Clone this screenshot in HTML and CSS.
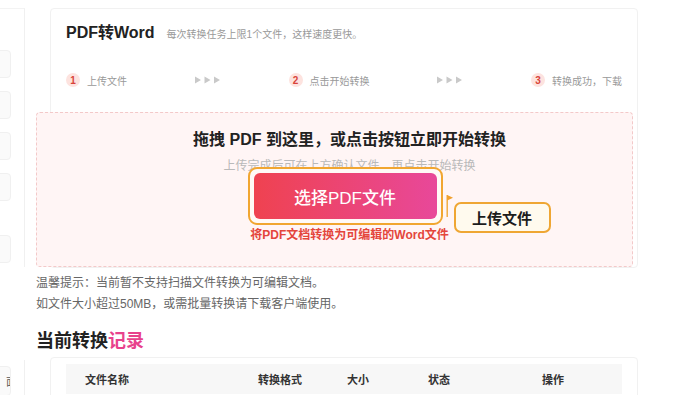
FILE: index.html
```html
<!DOCTYPE html>
<html lang="zh-CN">
<head>
<meta charset="utf-8">
<title>PDF转Word</title>
<link rel="stylesheet" href="styles.css">
</head>
<body>
<div class="page">
  <aside class="side">
    <div class="side-panel side-top">
      <div class="side-box"></div>
      <div class="side-box"></div>
      <div class="side-box"></div>
      <div class="side-box"></div>
      <div class="side-box side-box-far"></div>
    </div>
    <div class="side-panel side-bottom">
      <div class="side-box side-box-text"><span>面</span></div>
    </div>
  </aside>

  <main class="main">
    <section class="card conv">
      <header class="conv-head">
        <h1 class="conv-title">PDF转Word</h1>
        <p class="conv-desc">每次转换任务上限1个文件，这样速度更快。</p>
      </header>
      <ol class="steps">
        <li class="step"><span class="step-num">1</span>上传文件</li>
        <li class="step-arrows"><svg width="26" height="8" viewBox="0 0 26 8"><path d="M0 0.5L6 4L0 7.5Z M9.5 0.5L15.5 4L9.5 7.5Z M19 0.5L25 4L19 7.5Z" fill="#c9c9c9"/></svg></li>
        <li class="step"><span class="step-num">2</span>点击开始转换</li>
        <li class="step-arrows"><svg width="26" height="8" viewBox="0 0 26 8"><path d="M0 0.5L6 4L0 7.5Z M9.5 0.5L15.5 4L9.5 7.5Z M19 0.5L25 4L19 7.5Z" fill="#c9c9c9"/></svg></li>
        <li class="step"><span class="step-num">3</span>转换成功，下载</li>
      </ol>
      <div class="drop">
        <h2 class="drop-title">拖拽 PDF 到这里，或点击按钮立即开始转换</h2>
        <p class="drop-sub">上传完成后可在上方确认文件，再点击开始转换</p>
        <div class="pick-row">
          <div class="pick-wrap">
            <button class="pick" type="button">选择PDF文件</button>
            <div class="callout">
              <svg class="callout-flag" width="8" height="24" viewBox="0 0 8 24"><path d="M1.2 1V23" stroke="#f0a838" stroke-width="1.4"/><path d="M1.2 1L7 3.8L1.2 6.6Z" fill="#f0a02c"/></svg>
              <span class="callout-box">上传文件</span>
            </div>
          </div>
        </div>
        <p class="drop-note">将PDF文档转换为可编辑的Word文件</p>
      </div>
    </section>

    <p class="tips">温馨提示：当前暂不支持扫描文件转换为可编辑文档。<br>如文件大小超过50MB，或需批量转换请下载客户端使用。</p>

    <h2 class="rec-title">当前转换<em>记录</em></h2>

    <section class="card records">
      <div class="thead">
        <span>文件名称</span>
        <span>转换格式</span>
        <span>大小</span>
        <span>状态</span>
        <span>操作</span>
      </div>
    </section>
  </main>
</div>
</body>
</html>
```

FILE: styles.css
```css
html, body {
  margin: 0;
  height: 395px;
  overflow: hidden;
  background: #ffffff;
}

body {
  font-family: "Liberation Sans", "Noto Sans CJK SC", sans-serif;
  color: #222222;
}

.page {
  display: flex;
  height: 395px;
  overflow: hidden;
}

/* sidebar */
.side {
  flex: none;
  width: 25px;
}

.side-panel {
  box-sizing: border-box;
  border-right: 1px solid #f0f0f0;
  overflow: hidden;
}

.side-top {
  margin-top: 8px;
  height: 259px;
  border-top: 1px solid #f3f3f3;
  padding-top: 41px;
}

.side-bottom {
  margin-top: 93px;
  height: 60px;
  padding-top: 6px;
}

.side-box {
  box-sizing: border-box;
  margin-left: -20px;
  width: 31px;
  height: 28px;
  margin-bottom: 13px;
  border: 1px solid #f0f0f0;
  border-radius: 4px;
  background: #fafafa;
}

.side-box-far {
  margin-top: 34px;
}

.side-box-text {
  height: 30px;
  display: flex;
  align-items: center;
  justify-content: flex-end;
  overflow: hidden;
  font-family: "Noto Sans CJK SC", sans-serif;
  font-size: 11px;
  color: #555555;
}

.side-box-text span {
  margin-right: -7px;
}

/* main column */
.main {
  flex: none;
  width: 597px;
  padding-left: 11px;
}

.card {
  border: 1px solid #f1f1f1;
  border-radius: 4px;
  background: #ffffff;
}

.conv {
  margin: 8px -5px 0 14px;
}

.conv-head {
  display: flex;
  align-items: baseline;
  padding: 12px 15px 0;
}

.conv-title {
  margin: 0;
  font-size: 16px;
  line-height: 24px;
  font-weight: 700;
  color: #222222;
}

.conv-desc {
  margin: 0 0 0 12px;
  font-size: 10px;
  color: #999999;
}

.steps {
  display: flex;
  justify-content: space-between;
  align-items: center;
  list-style: none;
  margin: 27px 0 0;
  padding: 0 15px;
  height: 16px;
}

.step {
  display: flex;
  align-items: center;
  font-size: 10px;
  color: #999999;
}

.step-num {
  width: 14px;
  height: 14px;
  border-radius: 50%;
  background: #fde3df;
  color: #d8433a;
  font-size: 10px;
  font-weight: 700;
  display: flex;
  align-items: center;
  justify-content: center;
  margin-right: 7px;
}

.step-arrows {
  display: flex;
  align-items: center;
}

/* drop zone */
.drop {
  box-sizing: border-box;
  height: 155px;
  margin: 24px 4px 0 -15px;
  padding: 16px 0 0 30px;
  border: 1px dashed #f3c9c9;
  border-radius: 4px;
  background: #fff5f5;
  text-align: center;
}

.drop-title {
  margin: 0;
  font-size: 16px;
  line-height: 22px;
  font-weight: 700;
  color: #222222;
}

.drop-sub {
  margin: 8px 0 0;
  font-size: 12px;
  line-height: 14px;
  color: #b9b9b9;
}

.pick-row {
  display: flex;
  justify-content: center;
}

.pick-wrap {
  position: relative;
  margin-left: -9px;
}

.pick-wrap::before {
  content: "";
  position: absolute;
  left: -6px;
  top: -6px;
  right: -6px;
  bottom: -6px;
  border: 2.5px solid #f1a631;
  border-radius: 9px;
  background: #fff9f6;
  box-sizing: border-box;
}

.pick {
  position: relative;
  display: block;
  width: 183px;
  height: 46px;
  border: 0;
  border-radius: 6px;
  background: linear-gradient(90deg, #ef4250, #e8489a);
  color: #ffffff;
  font-family: "Liberation Sans", "Noto Sans CJK SC", sans-serif;
  font-size: 17px;
  font-weight: 500;
  padding: 0;
}

.callout {
  position: absolute;
  left: 192px;
  top: 21px;
  display: flex;
  align-items: flex-start;
}

.callout-flag {
  display: block;
}

.callout-box {
  box-sizing: border-box;
  margin-top: 8px;
  width: 97px;
  height: 31px;
  border: 2px solid #efa633;
  border-radius: 7px;
  background: #fffaee;
  display: flex;
  align-items: center;
  justify-content: center;
  font-family: "Noto Sans CJK SC", sans-serif;
  font-size: 15px;
  font-weight: 700;
  color: #1c1c1c;
}

.drop-note {
  margin: 8px 0 0;
  font-size: 12px;
  line-height: 16px;
  font-weight: 600;
  color: #e4463c;
}

/* tips */
.tips {
  margin: 5px 0 0;
  font-size: 12px;
  line-height: 21px;
  color: #666666;
}

.rec-title {
  margin: 13px 0 0;
  font-size: 18px;
  line-height: 26px;
  font-weight: 700;
  color: #222222;
}

.rec-title em {
  font-style: normal;
  color: #e8428c;
}

/* records */
.records {
  margin: 3px -5px 0 14px;
  padding: 6px 15px 0;
  height: 60px;
}

.thead {
  display: grid;
  grid-template-columns: 173px 89px 81px 114px 1fr;
  align-items: center;
  height: 30px;
  padding-left: 19px;
  background: #f7f7f7;
  font-size: 11px;
  font-weight: 700;
  color: #333333;
}
```
